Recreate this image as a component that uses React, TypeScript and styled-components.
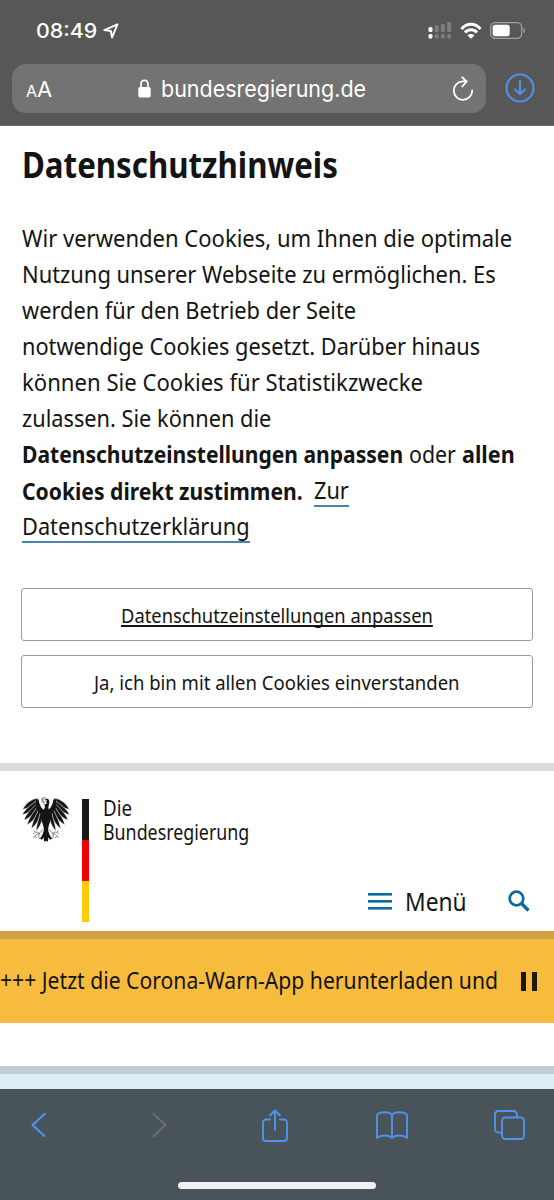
import React, { useLayoutEffect, useRef, useState } from 'react';
import styled, { createGlobalStyle } from 'styled-components';

const BLUE = '#4f93ea';
const PETROL = '#0b6a9c';

const GlobalStyle = createGlobalStyle`
  * { box-sizing: border-box; }
  body { margin: 0; background: #fff; }
  svg { display: block; flex: none; overflow: visible; }
`;

const Screen = styled.div`
  width: 554px;
  height: 1200px;
  display: flex;
  flex-direction: column;
  overflow: hidden;
  background: #fff;
  color: #141414;
  font-family: 'Noto Sans', 'Open Sans', sans-serif;
`;

/* Text set to a fixed measure: glyphs are condensed to the given width. */
const Measure = styled.span<{ $width: number; $underline?: string }>`
  display: inline-block;
  width: ${(p) => p.$width}px;
  white-space: nowrap;
  text-align: left;
  border-bottom: ${(p) => (p.$underline ? `2px solid ${p.$underline}` : '0')};
`;
const Glyphs = styled.span`
  display: inline-block;
  transform-origin: 0 50%;
`;

function Fit({ w, underline, children }: { w: number; underline?: string; children: React.ReactNode }) {
  const ref = useRef<HTMLSpanElement>(null);
  const [scale, setScale] = useState(1);
  useLayoutEffect(() => {
    if (ref.current) setScale(w / ref.current.offsetWidth);
  }, [w]);
  return (
    <Measure $width={w} $underline={underline}>
      <Glyphs ref={ref} style={{ transform: `scaleX(${scale})` }}>{children}</Glyphs>
    </Measure>
  );
}

const BrowserTop = styled.header`
  height: 126px;
  flex: none;
  background: #575757;
  border-bottom: 1px solid #6a6a6a;
  color: #fff;
  font-family: Inter, 'Liberation Sans', sans-serif;
`;
const StatusBar = styled.div`
  height: 64px;
  padding: 0 28px 3px 36px;
  display: flex;
  align-items: center;
  justify-content: space-between;
`;
const Clock = styled.div`
  display: flex;
  align-items: center;
  gap: 5px;
  font-size: 20.5px;
  font-weight: 500;
  line-height: 24px;
`;
const StatusIcons = styled.div`
  display: flex;
  align-items: center;
  gap: 8px;
`;
const AddressRow = styled.div`
  display: flex;
  align-items: center;
  padding: 0 19px 0 12px;
  justify-content: space-between;
`;
const AddressField = styled.div`
  width: 474px;
  height: 48.5px;
  padding: 1px 12px 0 14px;
  border-radius: 14px;
  background: #737373;
  display: flex;
  align-items: center;
  justify-content: space-between;
`;
const TextSize = styled.div`
  display: flex;
  align-items: baseline;
  width: 36px;
  font-size: 22px;
`;
const SmallA = styled.span`
  font-size: 16px;
`;
const Domain = styled.div`
  display: flex;
  align-items: center;
  gap: 10px;
  margin-left: 62px;
  margin-right: auto;
  padding-left: 13.5px;
  font-size: 22.3px;
  line-height: 28px;
`;

const Notice = styled.section`
  height: 645px;
  flex: none;
  padding: 0 21px;
  border-bottom: 8px solid #dbdbdb;
`;
const Title = styled.h1`
  margin: 0;
  padding: 17px 0 0 1px;
  font-size: 35px;
  line-height: 44px;
  font-weight: 700;
`;
const Copy = styled.div`
  padding: 32.5px 0 0 0.5px;
  font-size: 23.6px;
`;
const Line = styled.div`
  height: 36.17px;
  line-height: 36px;
  display: flex;
  align-items: flex-start;
`;
const Space = styled.span<{ $width: number }>`
  width: ${(p) => p.$width}px;
`;
const LinkText = styled.span`
  line-height: 29px;
  padding-top: 3.5px;
`;
const Actions = styled.div`
  display: flex;
  flex-direction: column;
  gap: 14px;
  padding-top: 43.5px;
`;
const ActionButton = styled.button<{ $underlined?: boolean }>`
  height: 53px;
  width: 512px;
  padding: 0;
  border: 1.5px solid #9c9c9c;
  border-radius: 3px;
  background: #fff;
  color: #141414;
  font: 400 20.4px/28px 'Noto Sans', sans-serif;

  ${Glyphs} {
    text-decoration: ${(p) => (p.$underlined ? 'underline' : 'none')};
    text-decoration-thickness: 1.5px;
    text-underline-offset: 2px;
    text-decoration-skip-ink: none;
  }
`;

const SiteHeader = styled.div`
  height: 160px;
  flex: none;
  padding: 0 24px 0 22px;
  display: flex;
  justify-content: space-between;
`;
const Brand = styled.div`
  display: flex;
  align-items: flex-start;
  padding-top: 26px;
`;
const Flag = styled.div`
  width: 7px;
  height: 123px;
  margin: 2px 14px 0 12px;
  display: grid;
  grid-template-rows: repeat(3, 1fr);
`;
const Stripe = styled.div<{ $color: string }>`
  background: ${(p) => p.$color};
`;
const BrandName = styled.div`
  display: flex;
  flex-direction: column;
  font-size: 22.6px;
  line-height: 24.4px;
  margin-top: -1px;
`;
const SiteNav = styled.nav`
  display: flex;
  align-items: center;
  align-self: flex-end;
  height: 59px;
  font-size: 24.6px;
`;
const MenuLabel = styled.span`
  margin: 0 41.5px 0 13px;
  line-height: 32px;
`;

const Ticker = styled.div`
  height: 92px;
  flex: none;
  padding: 0 17px 0 0;
  border-top: 8px solid #d3a244;
  background: #f7bb3e;
  display: flex;
  align-items: center;
  justify-content: space-between;
  font-size: 23.2px;
`;
const TickerText = styled.div`
  padding-bottom: 3px;
`;
const Pause = styled.div`
  width: 16px;
  height: 19px;
  border: solid #1d1808;
  border-width: 0 5.5px;
`;
const Teaser = styled.div`
  flex: 1;
  margin-top: 42.5px;
  border-top: 8px solid #bfced5;
  background: #dceff8;
`;

const BrowserBottom = styled.footer`
  height: 111.5px;
  flex: none;
  background: #49535a;
  display: flex;
  flex-direction: column;
  align-items: center;
  justify-content: space-between;
  padding-bottom: 11px;
`;
const Tools = styled.div`
  width: 100%;
  height: 73px;
  padding: 0 29px 0 31px;
  display: grid;
  grid-template-columns: 121px 110px 114px 118px 31px;
  align-items: center;
`;
const HomeIndicator = styled.div`
  width: 198px;
  height: 7px;
  border-radius: 4px;
  background: #f2f0f1;
`;

const WING = [
  'M50 14C34 17 15 30 8 48C20 45 36 37 46 32Z',
  'M47 23C34 34 14 46 7 64C22 60 38 50 49 38Z',
  'M47 33C36 46 18 58 12 80C27 74 43 60 52 45Z',
  'M51 40C42 56 27 70 21 94C36 86 51 69 58 52Z',
  'M56 46C50 64 38 78 34 105C47 95 59 77 64 57Z',
  'M62 50C59 70 51 84 48 112C59 101 68 83 70 60Z',
];

function Eagle() {
  const half = (
    <g>
      {WING.map((d) => <path key={d} d={d} />)}
      <path stroke="none" d="M50 14C45 27 44 36 50 46L66 66L78 70V52C67 48 58 36 56 18Z" />
      <path
        d="M70 106L58 119M58 119C50 112 44 116 39 121M58 119C49 121 43 127 41 133M58 119C55 126 56 131 60 136M45 114L41 112M46 128L51 133"
        fill="none"
        stroke="#4a4a4a"
        strokeWidth="2"
      />
    </g>
  );
  return (
    <svg width="48" height="46" viewBox="6 10 144 138" fill="#141616" stroke="#fff" strokeWidth="1.8">
      {half}
      <g transform="matrix(-1 0 0 1 156 0)">{half}</g>
      <path stroke="none" d="M68 52C76 44 76 38 73 32L80 30L79 22L74 19C80 12 88 16 88 25C88 33 82 40 88 52C94 66 92 82 86 97L84 108L88 122L96 135L90 138L85 131L84 144L78 141L72 144L71 131L66 138L60 135L68 122L72 108L70 97C64 82 62 66 68 52Z" />
      <path d="M80 15C75 10 69 12 64 16L71 17L65 22L72 23L68 28L75 27" fill="none" stroke="#444" strokeWidth="2" />
      <circle cx="79" cy="20" r="1.8" fill="#fff" stroke="none" />
    </svg>
  );
}

export default function App() {
  return (
    <Screen>
      <GlobalStyle />
      <BrowserTop>
        <StatusBar>
          <Clock>
            <Fit w={61.5}>08:49</Fit>
            <svg width="16" height="16" viewBox="0 0 15 15" fill="none" stroke="#fff" strokeWidth="1.8" strokeLinejoin="round">
              <path d="M13.5 1.2L1.2 6.6L7.4 7.5L8.5 13.6Z" />
            </svg>
          </Clock>
          <StatusIcons>
            <svg width="24" height="17" viewBox="0 0 24 17" fill="#7d7d7d">
              <rect x="0.5" y="5" width="4" height="5" rx="1.5" fill="#fff" />
              <rect x="6.7" y="3.5" width="4" height="6.5" rx="1.2" />
              <rect x="12.9" y="2" width="4" height="8" rx="1.2" />
              <rect x="19.1" y="0" width="4" height="10" rx="1.2" />
              <rect x="0.5" y="12" width="4" height="4.7" rx="1.6" fill="#fff" />
              <rect x="6.7" y="12" width="4" height="4.5" rx="1.5" />
              <rect x="12.9" y="12" width="4" height="4.5" rx="1.5" />
              <rect x="19.1" y="12" width="4" height="4.5" rx="1.5" />
            </svg>
            <svg width="22" height="16" viewBox="0 0 22 16" fill="none" stroke="#fff" strokeWidth="3">
              <path d="M1.5 6C7-.2 15-.2 20.5 6" />
              <path d="M5 9.6C8.5 5.8 13.5 5.8 17 9.6" />
              <path d="M11 15.8L7.5 12.4C9.5 10.5 12.5 10.5 14.5 12.4Z" fill="#fff" stroke="none" />
            </svg>
            <svg width="36" height="17" viewBox="0 0 36 17">
              <rect x="0.7" y="0.7" width="31" height="15.6" rx="4.5" fill="none" stroke="#a0a0a0" strokeWidth="1.3" />
              <rect x="2.7" y="2.7" width="17" height="11.6" rx="2.5" fill="#fff" />
              <path d="M33.5 5.8C35.5 6.8 35.5 10.2 33.5 11.2Z" fill="#a0a0a0" />
            </svg>
          </StatusIcons>
        </StatusBar>
        <AddressRow>
          <AddressField>
            <TextSize><SmallA>A</SmallA>A</TextSize>
            <Domain>
              <svg width="13" height="19" viewBox="0 0 13 19">
                <rect x="0.3" y="8" width="12.4" height="10.5" rx="1.7" fill="#fff" />
                <path d="M3 9V5.2C3 .2 10 .2 10 5.2V9" fill="none" stroke="#fff" strokeWidth="1.7" />
              </svg>
              <Fit w={205}>bundesregierung.de</Fit>
            </Domain>
            <svg width="22" height="26" viewBox="0 0 22 26" fill="none" stroke="#fff" strokeWidth="1.8" strokeLinecap="round" strokeLinejoin="round">
              <path d="M13 5.4H10.5A9.2 9.2 0 1 0 20.2 14.5M10.3 1.3L14.7 5.5L10.3 10.3" />
            </svg>
          </AddressField>
          <svg width="30" height="30" viewBox="0 0 30 30" fill="none" stroke={BLUE} strokeWidth="2" strokeLinecap="round" strokeLinejoin="round">
            <circle cx="15" cy="15" r="13.5" />
            <path d="M15 8V21M10 16.2L15 21.2L20 16.2" />
          </svg>
        </AddressRow>
      </BrowserTop>

      <Notice>
        <Title><Fit w={316}>Datenschutzhinweis</Fit></Title>
        <Copy>
          <Line><Fit w={490}>Wir verwenden Cookies, um Ihnen die optimale</Fit></Line>
          <Line><Fit w={474}>Nutzung unserer Webseite zu ermöglichen. Es</Fit></Line>
          <Line><Fit w={334.5}>werden für den Betrieb der Seite</Fit></Line>
          <Line><Fit w={458}>notwendige Cookies gesetzt. Darüber hinaus</Fit></Line>
          <Line><Fit w={401}>können Sie Cookies für Statistikzwecke</Fit></Line>
          <Line><Fit w={249}>zulassen. Sie können die</Fit></Line>
          <Line>
            <b><Fit w={381}>Datenschutzeinstellungen anpassen</Fit></b>
            <Space $width={6} />
            <Fit w={47}>oder</Fit>
            <Space $width={6} />
            <b><Fit w={53}>allen</Fit></b>
          </Line>
          <Line>
            <b><Fit w={281}>Cookies direkt zustimmen.</Fit></b>
            <Space $width={11} />
            <LinkText><Fit w={35} underline="#4a86ab">Zur</Fit></LinkText>
          </Line>
          <Line>
            <LinkText><Fit w={228} underline="#4a86ab">Datenschutzerklärung</Fit></LinkText>
          </Line>
        </Copy>
        <Actions>
          <ActionButton $underlined><Fit w={312}>Datenschutzeinstellungen anpassen</Fit></ActionButton>
          <ActionButton><Fit w={366}>Ja, ich bin mit allen Cookies einverstanden</Fit></ActionButton>
        </Actions>
      </Notice>

      <SiteHeader>
        <Brand>
          <Eagle />
          <Flag>
            <Stripe $color="#191a18" />
            <Stripe $color="#f00000" />
            <Stripe $color="#fdcb08" />
          </Flag>
          <BrandName>
            <Fit w={29}>Die</Fit>
            <Fit w={146}>Bundesregierung</Fit>
          </BrandName>
        </Brand>
        <SiteNav>
          <svg width="24" height="17" viewBox="0 0 24 17" fill={PETROL}>
            <rect width="24" height="2.6" />
            <rect y="7" width="24" height="2.6" />
            <rect y="14" width="24" height="2.6" />
          </svg>
          <MenuLabel><Fit w={62}>Menü</Fit></MenuLabel>
          <svg width="22" height="22" viewBox="0 0 22 22" fill="none" stroke={PETROL}>
            <circle cx="8.5" cy="7.5" r="6.8" strokeWidth="2.7" />
            <path d="M13.3 12.3L20.5 19.5" strokeWidth="3.4" />
          </svg>
        </SiteNav>
      </SiteHeader>

      <Ticker>
        <TickerText>
          <Fit w={498}>+++ Jetzt die Corona-Warn-App herunterladen und</Fit>
        </TickerText>
        <Pause />
      </Ticker>
      <Teaser />

      <BrowserBottom>
        <Tools>
          <svg width="15" height="24" viewBox="0 0 15 24" fill="none" stroke={BLUE} strokeWidth="2.2" strokeLinecap="round" strokeLinejoin="round">
            <path d="M13.5 1L1.5 12L13.5 23" />
          </svg>
          <svg width="15" height="24" viewBox="0 0 15 24" fill="none" stroke="#6a7277" strokeWidth="2" strokeLinecap="round" strokeLinejoin="round">
            <path d="M1.5 1L13.5 12L1.5 23" />
          </svg>
          <svg width="26" height="33" viewBox="0 0 26 33" fill="none" stroke={BLUE} strokeWidth="1.9" strokeLinecap="round" strokeLinejoin="round">
            <path d="M8 10.5H4A3 3 0 0 0 1 13.5V29A3 3 0 0 0 4 32H22A3 3 0 0 0 25 29V13.5A3 3 0 0 0 22 10.5H18M13 21V1.5M8 6.5L13 1.3L18 6.5" />
          </svg>
          <svg width="32" height="28" viewBox="0 0 32 28" fill="none" stroke={BLUE} strokeWidth="1.9" strokeLinejoin="round">
            <path d="M16 4C13.500 .3 4 .3 1 4V27C4 23.700 13.500 23.700 16 27C18.500 23.700 28 23.700 31 27V4C28 .3 18.500 .3 16 4V27" />
          </svg>
          <svg width="31" height="30" viewBox="0 0 31 30" fill="none" stroke={BLUE} strokeWidth="1.9" strokeLinejoin="round">
            <rect x="8" y="7.5" width="22" height="21.5" rx="3.5" />
            <path d="M8 22.5H4.5A3.5 3.5 0 0 1 1 19V4.5A3.5 3.5 0 0 1 4.5 1H19.5A3.5 3.5 0 0 1 23 4.5V7.5" />
          </svg>
        </Tools>
        <HomeIndicator />
      </BrowserBottom>
    </Screen>
  );
}
